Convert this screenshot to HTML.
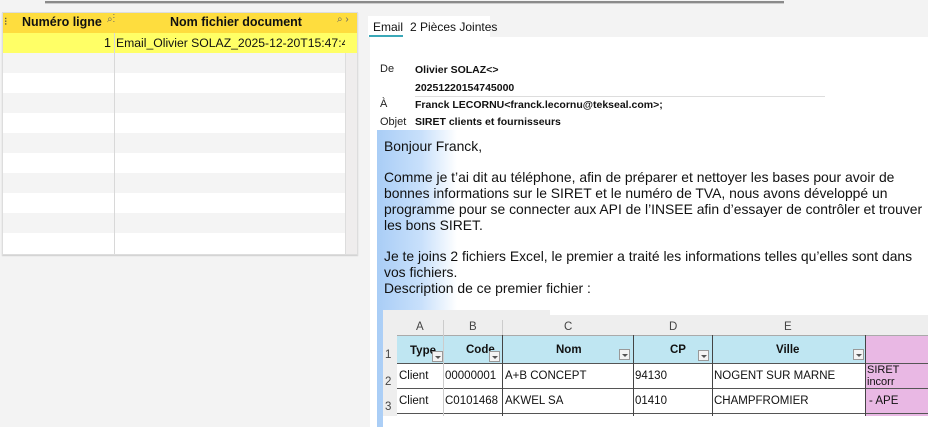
<!DOCTYPE html>
<html><head><meta charset="utf-8"><style>
*{margin:0;padding:0;box-sizing:border-box}
body{width:928px;height:427px;overflow:hidden;background:#f3f3f3;font-family:"Liberation Sans",sans-serif;position:relative}
.a{position:absolute}
.row{position:absolute;left:3px;width:342px;height:20px}
.t{font-size:12.5px;color:#111;white-space:nowrap}
.lbl{position:absolute;left:380px;font-size:11px;color:#222}
.val{position:absolute;left:415px;font-size:10.5px;font-weight:bold;color:#111}
.body{position:absolute;left:384px;font-size:13.9px;color:#111;line-height:16px;white-space:nowrap}
.xc{position:absolute;font-family:"Liberation Sans",sans-serif;font-size:11.5px;color:#111;white-space:nowrap}
.dd{position:absolute;width:11px;height:11px;border:1px solid #999;background:#f4f4f4}
.dd:after{content:"";position:absolute;left:2px;top:4px;border-left:3px solid transparent;border-right:3px solid transparent;border-top:3px solid #555}
</style></head><body>
<div class="a" style="left:45px;top:1px;width:739px;height:3px;background:#8a8a8a;border-bottom:1px solid #ccc"></div>

<!-- grid -->
<div class="a" style="left:2px;top:12px;width:356px;height:243px;background:#fff;border:1px solid #ddd;box-shadow:0 1px 1px #ccc"></div>
<div class="a" style="left:3px;top:13px;width:354px;height:20px;background:#fedd3e"></div>
<div class="a t" style="left:4px;top:15px;font-size:11px;color:#444">⁝</div>
<div class="a t" style="left:22px;top:15px;font-weight:bold;font-size:12.5px">Numéro ligne</div>
<div class="a t" style="left:107px;top:14px;font-size:10px;color:#666">⌕⁝</div>
<div class="a t" style="left:170px;top:15px;font-weight:bold;font-size:12.5px">Nom fichier document</div>
<div class="a t" style="left:337px;top:14px;font-size:10px;color:#666">⌕ ›</div>
<div class="row" style="top:33px;width:354px;background:#ffff66"></div>
<div class="row" style="top:53px;background:#f4f4f4"></div>
<div class="row" style="top:93px;background:#f4f4f4"></div>
<div class="row" style="top:133px;background:#f4f4f4"></div>
<div class="row" style="top:173px;background:#f4f4f4"></div>
<div class="row" style="top:213px;background:#f4f4f4"></div>
<div class="a" style="left:345px;top:53px;width:12px;height:201px;background:#efeded;border-left:1px solid #ddd"></div>
<div class="a" style="left:114px;top:33px;width:1px;height:221px;background:#d8d8d8"></div>
<div class="a t" style="left:104px;top:36px">1</div>
<div class="a t" style="left:116px;top:36px;width:229px;overflow:hidden;font-size:12.2px">Email_Olivier SOLAZ_2025-12-20T15:47:45Z.eml</div>

<!-- right panel -->
<div class="a" style="left:368px;top:16px;width:122px;height:21px;background:#fff"></div>
<div class="a t" style="left:373px;top:20px;font-size:12px">Email</div>
<div class="a" style="left:369px;top:35px;width:34px;height:2px;background:#3aa8b8"></div>
<div class="a t" style="left:410px;top:20px;font-size:12px">2 Pièces Jointes</div>
<div class="a" style="left:370px;top:37px;width:558px;height:390px;background:#fff"></div>

<div class="lbl" style="top:63px">De</div>
<div class="val" style="top:64px">Olivier SOLAZ&lt;&gt;</div>
<div class="val" style="top:82px">20251220154745000</div>
<div class="a" style="left:415px;top:96px;width:410px;height:1px;background:#ddd"></div>
<div class="lbl" style="top:98px">À</div>
<div class="val" style="top:99px">Franck LECORNU&lt;franck.lecornu@tekseal.com&gt;;</div>
<div class="lbl" style="top:116px">Objet</div>
<div class="val" style="top:116px">SIRET clients et fournisseurs</div>

<div class="a" style="left:377px;top:130px;width:80px;height:297px;background:linear-gradient(90deg,#a9cdf6,#c8e0fb 55%,#fff)"></div>
<div class="body" style="top:138px">Bonjour Franck,</div>
<div class="body" style="top:169px">Comme je t’ai dit au téléphone, afin de préparer et nettoyer les bases pour avoir de<br>bonnes informations sur le SIRET et le numéro de TVA, nous avons développé un<br>programme pour se connecter aux API de l’INSEE afin d’essayer de contrôler et trouver<br>les bons SIRET.</div>
<div class="body" style="top:248px">Je te joins 2 fichiers Excel, le premier a traité les informations telles qu’elles sont dans<br>vos fichiers.<br>Description de ce premier fichier :</div>

<!-- excel -->
<div class="a" style="left:383px;top:310px;width:545px;height:117px;background:#eeeeee"></div>
<div class="a" style="left:550px;top:310px;width:378px;height:5px;background:#fff"></div>
<div class="a" style="left:397px;top:335px;width:468px;height:28px;background:#bfe6f2"></div>
<div class="a" style="left:865px;top:335px;width:63px;height:92px;background:#e9b8e4"></div>
<div class="a" style="left:397px;top:363px;width:468px;height:64px;background:#fff"></div>
<div class="a" style="left:397px;top:335px;width:531px;height:1px;background:#aaa"></div>
<div class="a" style="left:397px;top:363px;width:531px;height:1px;background:#555"></div>
<div class="a" style="left:397px;top:388px;width:531px;height:1px;background:#555"></div>
<div class="a" style="left:397px;top:413px;width:531px;height:1px;background:#555"></div>
<div class="a" style="left:443px;top:320px;width:1px;height:107px;background:#ccc"></div>
<div class="a" style="left:502px;top:320px;width:1px;height:107px;background:#ccc"></div>
<div class="a" style="left:502px;top:335px;width:1px;height:92px;background:#444"></div>
<div class="a" style="left:633px;top:335px;width:1px;height:92px;background:#444"></div>
<div class="a" style="left:712px;top:335px;width:1px;height:92px;background:#444"></div>
<div class="a" style="left:865px;top:335px;width:1px;height:92px;background:#444"></div>
<div class="xc" style="left:416px;top:321px;color:#444">A</div>
<div class="xc" style="left:469px;top:321px;color:#444">B</div>
<div class="xc" style="left:564px;top:321px;color:#444">C</div>
<div class="xc" style="left:669px;top:321px;color:#444">D</div>
<div class="xc" style="left:784px;top:321px;color:#444">E</div>
<div class="xc" style="left:385px;top:349px;color:#444">1</div>
<div class="xc" style="left:385px;top:376px;color:#444">2</div>
<div class="xc" style="left:385px;top:401px;color:#444">3</div>
<div class="xc" style="left:410px;top:345px;font-weight:bold">Type</div><div class="dd" style="left:432px;top:351px"></div>
<div class="xc" style="left:466px;top:344px;font-weight:bold">Code</div><div class="dd" style="left:489px;top:351px"></div>
<div class="xc" style="left:556px;top:344px;font-weight:bold">Nom</div><div class="dd" style="left:619px;top:349px"></div>
<div class="xc" style="left:670px;top:344px;font-weight:bold">CP</div><div class="dd" style="left:698px;top:350px"></div>
<div class="xc" style="left:776px;top:344px;font-weight:bold">Ville</div><div class="dd" style="left:853px;top:349px"></div>
<div class="xc" style="left:399px;top:370px">Client</div>
<div class="xc" style="left:445px;top:370px">00000001</div>
<div class="xc" style="left:505px;top:370px">A+B CONCEPT</div>
<div class="xc" style="left:635px;top:370px">94130</div>
<div class="xc" style="left:714px;top:370px">NOGENT SUR MARNE</div>
<div class="xc" style="left:867px;top:364px;font-size:11px">SIRET<br>incorr</div>
<div class="xc" style="left:399px;top:395px">Client</div>
<div class="xc" style="left:445px;top:395px">C0101468</div>
<div class="xc" style="left:505px;top:395px">AKWEL SA</div>
<div class="xc" style="left:635px;top:395px">01410</div>
<div class="xc" style="left:714px;top:395px">CHAMPFROMIER</div>
<div class="xc" style="left:869px;top:395px">- APE</div>
<div class="a" style="left:383px;top:416px;width:545px;height:11px;background:#fff"></div>
</body></html>
